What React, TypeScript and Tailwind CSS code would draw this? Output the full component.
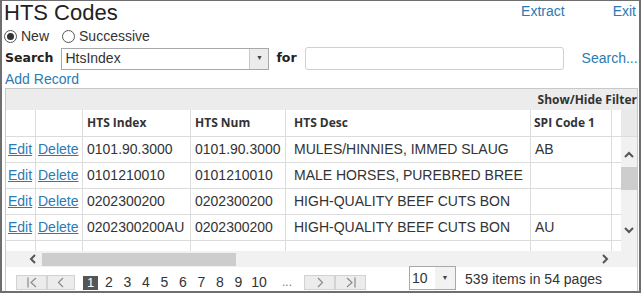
import * as React from 'react';

// grid rows
const rows = [
  { index: "0101.90.3000", num: "0101.90.3000", desc: "MULES/HINNIES, IMMED SLAUG", spi: "AB" },
  { index: "0101210010", num: "0101210010", desc: "MALE HORSES, PUREBRED BREE", spi: "" },
  { index: "0202300200", num: "0202300200", desc: "HIGH-QUALITY BEEF CUTS BON", spi: "" },
  { index: "0202300200AU", num: "0202300200", desc: "HIGH-QUALITY BEEF CUTS BON", spi: "AU" },
];

const cell = "h-full border-r border-[#dcdcdc] flex items-center overflow-hidden whitespace-nowrap";

function Chevron({ dir, className }: { dir: "left" | "right" | "up" | "down"; className?: string }) {
  const d = {
    left: "M6 1 L2 5 L6 9",
    right: "M2 1 L6 5 L2 9",
    up: "M1 6 L5 2 L9 6",
    down: "M1 3 L5 7 L9 3",
  }[dir];
  return (
    <svg width="10" height="10" viewBox="0 0 10 10" className={className}>
      <path d={d} fill="none" stroke="#555" strokeWidth="2" />
    </svg>
  );
}

function PagerButton({ kind, width }: { kind: "first" | "prev" | "next" | "last"; width: string }) {
  return (
    <div className={`${width} h-[15px] bg-[#ececec] border border-[#d2d2d2] flex items-center justify-center`}>
      <svg width="12" height="11" viewBox="0 0 12 11">
        {kind === "first" && <><path d="M2 0.5 V10.5" stroke="#8a8a8a" strokeWidth="1.2" /><path d="M10 1 L5 5.5 L10 10" fill="none" stroke="#8a8a8a" strokeWidth="1.2" /></>}
        {kind === "prev" && <path d="M8 1 L3.5 5.5 L8 10" fill="none" stroke="#8a8a8a" strokeWidth="1.2" />}
        {kind === "next" && <path d="M4 1 L8.5 5.5 L4 10" fill="none" stroke="#8a8a8a" strokeWidth="1.2" />}
        {kind === "last" && <><path d="M2 1 L7 5.5 L2 10" fill="none" stroke="#8a8a8a" strokeWidth="1.2" /><path d="M10 0.5 V10.5" stroke="#8a8a8a" strokeWidth="1.2" /></>}
      </svg>
    </div>
  );
}

function Radio({ checked, label }: { checked?: boolean; label: string }) {
  return (
    <label className="flex items-center gap-[4px]">
      <span className="w-[13px] h-[13px] rounded-full border border-[#555] bg-white flex items-center justify-center">
        {checked && <span className="w-[7px] h-[7px] rounded-full bg-[#333]"></span>}
      </span>
      <span>{label}</span>
    </label>
  );
}

export default function App() {
  return (
    <div className="w-[641px] h-[293px] border-2 border-t border-[#6e6e6e] bg-white text-[#333] text-[14px] font-['Liberation_Sans',Arial,sans-serif] flex flex-col">
      {/* Title bar */}
      <div className="h-[26px] flex items-start pl-[2px] pr-[3px]">
        <h1 className="text-[22px] leading-[24px] text-[#222]">HTS Codes</h1>
        <a className="ml-auto text-[#2c7ab3] leading-[20px]">Extract</a>
        <a className="ml-[48px] text-[#2c7ab3] leading-[20px]">Exit</a>
      </div>

      {/* Mode radios */}
      <div className="h-[18px] flex items-center pl-[2px] gap-[13px]">
        <Radio checked label="New" />
        <Radio label="Successive" />
      </div>

      {/* Search row */}
      <div className="mt-[2px] h-[23px] flex items-center pl-[3px]">
        <span className="font-['DejaVu_Sans',sans-serif] font-bold text-[12.5px] text-[#222]">Search</span>
        <div className="ml-[8px] w-[208px] h-[22px] border border-[#a8a8a8] flex items-center">
          <span className="pl-[3px] flex-1">HtsIndex</span>
          <span className="w-[19px] h-full bg-[#ececec] border-l border-[#c8c8c8] flex items-center justify-center text-[7px] text-[#444]">▼</span>
        </div>
        <span className="ml-[7px] font-['DejaVu_Sans',sans-serif] font-bold text-[12.5px] text-[#222]">for</span>
        <div className="ml-[8px] w-[259px] h-[23px] border border-[#cfcfcf] rounded-[3px]"></div>
        <a className="ml-[18px] text-[#2c7ab3]">Search...</a>
      </div>

      <a className="h-[18px] pl-[3px] text-[#2c7ab3] leading-[18px]">Add Record</a>

      {/* Grid */}
      <div className="ml-[3px] w-[633px] flex-1 border border-b-0 border-[#c8c8c8] flex flex-col">
        <div className="h-[21px] bg-[#ececec] flex items-center justify-end font-['Open_Sans',sans-serif] font-bold text-[12px] text-[#333]">
          Show/Hide Filter
        </div>

        <div className="h-[157px] flex">
          <div className="w-[615px] flex flex-col">
            {/* column headers */}
            <div className="h-[27px] flex border-b border-[#dcdcdc] font-['Open_Sans',sans-serif] font-bold text-[12px]">
              <div className={`${cell} w-[30px]`}></div>
              <div className={`${cell} w-[47px]`}></div>
              <div className={`${cell} w-[108px] pl-[4px]`}>HTS Index</div>
              <div className={`${cell} w-[95px] pl-[4px]`}>HTS Num</div>
              <div className={`${cell} w-[245px] pl-[8px]`}>HTS Desc</div>
              <div className={`${cell} w-[81px] pl-[3px]`}>SPI Code 1</div>
              <div className="h-full w-[9px]"></div>
            </div>
            {rows.map((r, i) => (
              <div key={i} className="h-[26px] flex border-b border-[#dcdcdc]">
                <div className={`${cell} w-[30px] pl-[2px]`}><a className="text-[#2c7ab3] underline">Edit</a></div>
                <div className={`${cell} w-[47px] pl-[2px]`}><a className="text-[#2c7ab3] underline">Delete</a></div>
                <div className={`${cell} w-[108px] pl-[4px]`}>{r.index}</div>
                <div className={`${cell} w-[95px] pl-[4px]`}>{r.num}</div>
                <div className={`${cell} w-[245px] pl-[8px]`}>{r.desc}</div>
                <div className={`${cell} w-[81px] pl-[4px]`}>{r.spi}</div>
                <div className="h-full w-[9px]"></div>
              </div>
            ))}
            <div className="h-[10px] flex">
              <div className={`${cell} w-[30px]`}></div>
              <div className={`${cell} w-[47px]`}></div>
              <div className={`${cell} w-[108px]`}></div>
              <div className={`${cell} w-[95px]`}></div>
              <div className={`${cell} w-[245px]`}></div>
              <div className={`${cell} w-[81px]`}></div>
            </div>
            {/* horizontal scrollbar */}
            <div className="h-[16px] bg-[#f1f1f1] flex items-center">
              <div className="w-[36px] flex justify-end pr-[3px]"><Chevron dir="left" /></div>
              <div className="w-[194px] h-[13px] bg-[#cdcdcd]"></div>
              <div className="flex-1 flex justify-end pr-[10px]"><Chevron dir="right" /></div>
            </div>
          </div>

          {/* vertical scrollbar */}
          <div className="w-[16px] flex flex-col bg-[#f1f1f1]">
            <div className="h-[27px] bg-[#e9e9e9] border-b border-[#dcdcdc]"></div>
            <div className="h-[114px] flex flex-col items-center pt-[14px]">
              <Chevron dir="up" />
              <div className="mt-[6px] w-full h-[23px] bg-[#cdcdcd]"></div>
              <div className="flex-1"></div>
              <div className="mb-[16px]"><Chevron dir="down" /></div>
            </div>
            <div className="h-[16px]"></div>
          </div>
        </div>

        {/* pager */}
        <div className="h-[24px] flex items-end pb-[1px]">
          <div className="ml-[10px]"><PagerButton kind="first" width="w-[31px]" /></div>
          <PagerButton kind="prev" width="w-[28px]" />
          <div className="ml-[8px] flex items-center gap-[3.5px] h-[15px]">
            <span className="w-[15px] h-[14px] bg-[#555] text-white text-[13px] leading-[14px] text-center">1</span>
            {["2", "3", "4", "5", "6", "7", "8", "9"].map((n) => (
              <span key={n} className="w-[15px] text-center leading-[15px]">{n}</span>
            ))}
            <span className="w-[19px] text-center leading-[15px]">10</span>
            <span className="ml-[6px] w-[18px] text-center text-[12px] text-[#777] leading-[15px]">...</span>
          </div>
          <div className="ml-[8px]"><PagerButton kind="next" width="w-[31px]" /></div>
          <PagerButton kind="last" width="w-[31px]" />
          <div className="ml-[43px] w-[47px] h-[24px] border border-[#a8a8a8] flex items-center self-end">
            <span className="pl-[2px] flex-1">10</span>
            <span className="w-[20px] h-full bg-[#f2f2f2] flex items-center justify-center text-[7px] text-[#444]">▼</span>
          </div>
          <span className="ml-[9px] leading-[22px]">539 items in 54 pages</span>
        </div>
      </div>
    </div>
  );
}
